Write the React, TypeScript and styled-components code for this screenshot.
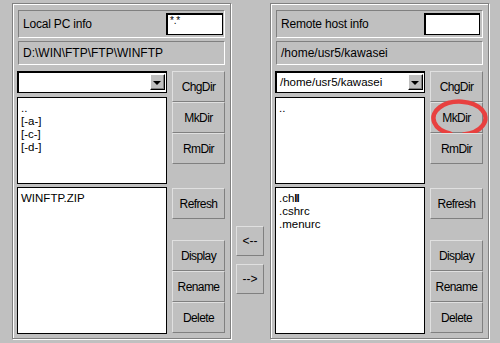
import React from 'react';
import styled, { createGlobalStyle } from 'styled-components';

const Global = createGlobalStyle`
  body {
    margin: 0;
    background: #c0c0c0;
    font-family: "Liberation Sans", Arial, sans-serif;
  }
`;

const Window = styled.div`
  display: flex;
  width: 500px;
  height: 343px;
  padding: 3px 0 0 12px;
  box-sizing: border-box;
  background: #c0c0c0;
`;

const Group = styled.div`
  position: relative;
  display: flex;
  flex-direction: column;
  width: 219px;
  height: 336px;
  box-sizing: border-box;
  border: 1px solid #808080;
  box-shadow: inset 1px 1px 0 #fff, 1px 1px 0 #fff;
  padding: 6px 5px 4px;
`;

const InfoBox = styled.div<{ $right: number }>`
  display: flex;
  align-items: center;
  justify-content: space-between;
  height: 28px;
  box-sizing: border-box;
  border: 1px solid;
  border-color: #808080 #fff #fff #808080;
  padding: 0 ${(p) => p.$right}px 0 4px;
  font-size: 12px;
  letter-spacing: -0.2px;
  color: #000;
`;

const Mask = styled.div<{ $w: number }>`
  width: ${(p) => p.$w}px;
  height: 22px;
  box-sizing: border-box;
  background: #fff;
  border: 1px solid #000;
  border-width: 2px 1px 1px 2px;
  font-size: 10px;
  line-height: 9px;
  padding: 1px 0 0 2px;
  color: #000;
`;

const PathBox = styled.div`
  display: flex;
  align-items: center;
  height: 24px;
  margin-top: 3px;
  box-sizing: border-box;
  border: 1px solid;
  border-color: #808080 #fff #fff #808080;
  padding-left: 4px;
  font-size: 12px;
  color: #000;
`;

const Body = styled.div`
  display: grid;
  grid-template-columns: 150px 53px;
  column-gap: 5px;
  margin: 6px 0 0 -1px;
  flex: 1;
`;

const Column = styled.div`
  display: flex;
  flex-direction: column;
`;

const Combo = styled.div`
  position: relative;
  height: 22px;
  box-sizing: border-box;
  background: #fff;
  border: 1px solid #000;
  border-width: 2px 1px 1px 2px;
  font-size: 11.5px;
  line-height: 18px;
  padding-left: 3px;
  color: #000;
`;

const DropButton = styled.div`
  position: absolute;
  right: 1px;
  top: 1px;
  width: 15px;
  height: 16px;
  box-sizing: border-box;
  background: #c0c0c0;
  border: 1px solid;
  border-color: #fff #000 #000 #fff;
  box-shadow: inset -1px -1px 0 #808080;
  display: flex;
  align-items: center;
  justify-content: center;
`;

const Arrow = styled.div`
  width: 0;
  height: 0;
  border-left: 4px solid transparent;
  border-right: 4px solid transparent;
  border-top: 4px solid #000;
  margin: 1px 1px 0 0;
`;

const List = styled.div<{ $h: number; $gap: number }>`
  height: ${(p) => p.$h}px;
  margin-top: ${(p) => p.$gap}px;
  box-sizing: border-box;
  background: #fff;
  border: 1px solid #000;
  padding: 4px 0 0 3px;
  font-size: 11.5px;
  line-height: 13px;
  color: #000;
`;

const Cursor = styled.span`
  font-weight: 900;
  letter-spacing: -1px;
`;

const Button = styled.div<{ $gap?: number }>`
  position: relative;
  height: 31px;
  margin-top: ${(p) => p.$gap ?? 0}px;
  box-sizing: border-box;
  background: #c0c0c0;
  border: 1px solid;
  border-color: #e0e0e0 #808080 #808080 #e0e0e0;
  display: flex;
  align-items: center;
  justify-content: center;
  font-size: 12px;
  letter-spacing: -0.6px;
  color: #000;
`;

const Middle = styled.div`
  display: flex;
  flex-direction: column;
  width: 39px;
  padding: 223px 0 0 5px;
  box-sizing: border-box;
  gap: 8px;
`;

const MoveButton = styled(Button)`
  width: 28px;
  height: 30px;
  letter-spacing: 0;
`;

const Circle = styled.svg`
  position: absolute;
  left: -1px;
  top: -6px;
  overflow: visible;
  pointer-events: none;
`;

type PanelProps = {
  title: string;
  mask: string;
  maskW: number;
  right: number;
  path: string;
  combo: string;
  dirs: React.ReactNode[];
  files: React.ReactNode[];
  marked?: boolean;
};

function Panel({ title, mask, maskW, right, path, combo, dirs, files, marked }: PanelProps) {
  return (
    <Group>
      <InfoBox $right={right}>
        <span>{title}</span>
        <Mask $w={maskW}>{mask}</Mask>
      </InfoBox>
      <PathBox>{path}</PathBox>
      <Body>
        <Column>
          <Combo>
            {combo}
            <DropButton>
              <Arrow />
            </DropButton>
          </Combo>
          <List $h={87} $gap={4}>
            {dirs.map((d, i) => (
              <div key={i}>{d}</div>
            ))}
          </List>
          <List $h={147} $gap={3}>
            {files.map((f, i) => (
              <div key={i}>{f}</div>
            ))}
          </List>
        </Column>
        <Column>
          <Button>ChgDir</Button>
          <Button>
            MkDir
            {marked && (
              <Circle width="62" height="42" viewBox="0 0 62 42">
                <path
                  d="M33.5 37.4 A26 16.5 0 1 0 20.5 36.6"
                  fill="none"
                  stroke="#e8403f"
                  strokeWidth="4.5"
                  strokeLinecap="round"
                />
              </Circle>
            )}
          </Button>
          <Button>RmDir</Button>
          <Button $gap={24}>Refresh</Button>
          <Button $gap={21}>Display</Button>
          <Button>Rename</Button>
          <Button>Delete</Button>
        </Column>
      </Body>
    </Group>
  );
}

export default function App() {
  return (
    <>
      <Global />
      <Window>
        <Panel
          title="Local PC info"
          mask="*.*"
          maskW={57}
          right={1}
          path="D:\WIN\FTP\FTP\WINFTP"
          combo=""
          dirs={['..', '[-a-]', '[-c-]', '[-d-]']}
          files={['WINFTP.ZIP']}
        />
        <Middle>
          <MoveButton>&lt;--</MoveButton>
          <MoveButton>--&gt;</MoveButton>
        </Middle>
        <Panel
          title="Remote host info"
          mask=""
          maskW={56}
          right={2}
          path="/home/usr5/kawasei"
          combo="/home/usr5/kawasei"
          dirs={['..']}
          files={[
            <>
              .ch<Cursor>ll</Cursor>
            </>,
            '.cshrc',
            '.menurc',
          ]}
          marked
        />
      </Window>
    </>
  );
}
